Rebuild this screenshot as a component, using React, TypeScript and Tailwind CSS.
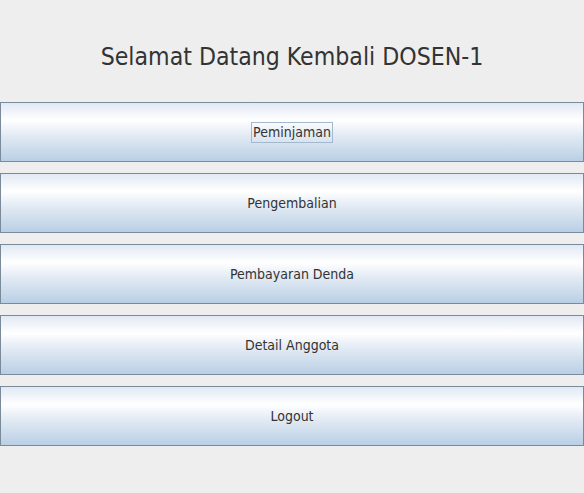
const items = ["Peminjaman", "Pengembalian", "Pembayaran Denda", "Detail Anggota", "Logout"];

const App: React.FC = () => {
  return (
    <div className="w-[584px] h-[493px] bg-[#eeeeee] font-['DejaVu_Sans_Condensed',sans-serif] text-[#333333]">
      <h1 className="pt-[40px] h-[102px] text-center text-[24.6px] leading-[34px]">
        Selamat Datang Kembali DOSEN-1
      </h1>
      <div className="flex flex-col gap-[11px]">
        {items.map((label, i) => (
          <button
            key={label}
            className="h-[60px] w-full border border-[#7a8a99] bg-[linear-gradient(to_bottom,#e1e9f4_0%,#ffffff_30%,#e3ebf4_55%,#b9cfe5_100%)] flex items-center justify-center text-[14px]"
          >
            <span className={i === 0 ? "border border-[#a3b8cc] px-[1px] leading-[19px]" : "leading-[19px]"}>
              {label}
            </span>
          </button>
        ))}
      </div>
    </div>
  );
};

export default App;
